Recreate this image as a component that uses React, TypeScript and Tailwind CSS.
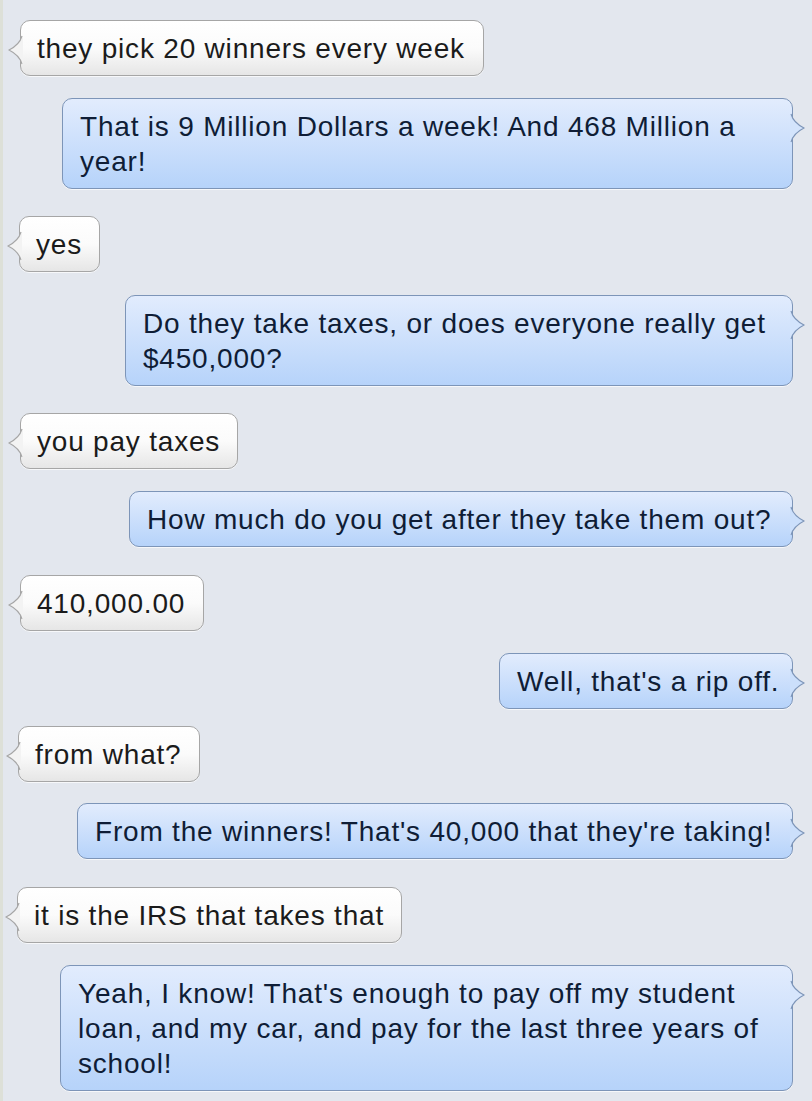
import React from "react";

type Msg = {
  side: "l" | "r";
  lines: string[];
  mt: number;
  off: number;
  w?: number;
};

const msgs: Msg[] = [
  { side: "l", lines: ["they pick 20 winners every week"], mt: 20, off: 20, w: 464 },
  { side: "r", lines: ["That is 9 Million Dollars a week! And 468 Million a", "year!"], mt: 22, off: 19, w: 731 },
  { side: "l", lines: ["yes"], mt: 27, off: 19, w: 81 },
  { side: "r", lines: ["Do they take taxes, or does everyone really get", "$450,000?"], mt: 23, off: 19, w: 668 },
  { side: "l", lines: ["you pay taxes"], mt: 27, off: 20, w: 218 },
  { side: "r", lines: ["How much do you get after they take them out?"], mt: 22, off: 19, w: 664 },
  { side: "l", lines: ["410,000.00"], mt: 28, off: 20, w: 184 },
  { side: "r", lines: ["Well, that's a rip off."], mt: 22, off: 19, w: 294 },
  { side: "l", lines: ["from what?"], mt: 17, off: 18, w: 182 },
  { side: "r", lines: ["From the winners! That's 40,000 that they're taking!"], mt: 21, off: 19, w: 716 },
  { side: "l", lines: ["it is the IRS that takes that"], mt: 28, off: 17, w: 385 },
  { side: "r", lines: ["Yeah, I know! That's enough to pay off my student", "loan, and my car, and pay for the last three years of", "school!"], mt: 22, off: 19, w: 733 },
];

function lerp(a: number[], b: number[], t: number) {
  const c = a.map((v, i) => Math.round(v + (b[i] - v) * t));
  return `rgb(${c[0]},${c[1]},${c[2]})`;
}

function Tail({ side, fill, stroke }: { side: "l" | "r"; fill: string; stroke: string }) {
  const flip = side === "r";
  return (
    <svg
      width="15"
      height="30"
      viewBox="0 0 15 30"
      className={flip ? "absolute top-[14px] right-[-13px] -scale-x-100" : "absolute top-[14px] left-[-13px]"}
    >
      <path d="M14 1 C 12 8, 7 12, 1 15 C 7 18, 12 22, 14 29 L 15 29 L 15 1 Z" fill={fill} />
      <path d="M14 1 C 12 8, 7 12, 1 15 C 7 18, 12 22, 14 29" fill="none" stroke={stroke} strokeWidth="1.1" />
    </svg>
  );
}

function Bubble({ m }: { m: Msg }) {
  const left = m.side === "l";
  const h = m.lines.length * 35 + 21;
  const t = 29 / h;
  const fill = left
    ? lerp([255, 255, 255], [232, 232, 232], t)
    : lerp([225, 236, 253], [182, 211, 250], t);
  return (
    <div
      className={left ? "flex justify-start" : "flex justify-end"}
      style={{ marginTop: m.mt, paddingLeft: left ? m.off : 0, paddingRight: left ? 0 : m.off }}
    >
      <div
        style={{ width: m.w }}
        className={
          left
            ? "relative shrink-0 rounded-[10px] border border-[#a6a6a6] bg-gradient-to-b from-[#ffffff] via-[#fbfbfb] to-[#e6e6e6] pl-[16px] pr-[10px] pt-[10px] pb-[9px] text-[#1b1b1b] shadow-[0_1px_0_rgba(255,255,255,0.7)]"
            : "relative shrink-0 rounded-[10px] border border-[#7d95b8] bg-gradient-to-b from-[#e2ecfd] to-[#b6d3fa] pl-[17px] pr-[10px] pt-[10px] pb-[9px] text-[#0f1d36] shadow-[0_1px_0_rgba(255,255,255,0.7)]"
        }
      >
        <Tail side={m.side} fill={fill} stroke={left ? "#a6a6a6" : "#7d95b8"} />
        <div className="whitespace-nowrap text-[28px] leading-[35px] tracking-[0.8px] font-['Liberation_Sans',Arial,sans-serif]">
          {m.lines.map((l, i) => (
            <div key={i}>{l}</div>
          ))}
        </div>
      </div>
    </div>
  );
}

export default function App() {
  return (
    <div className="relative w-[812px] h-[1101px] overflow-hidden bg-[#e3e7ee]">
      <div className="absolute left-0 top-0 h-full w-[3px] bg-[#dde0d8]" />
      <div className="flex flex-col">
        {msgs.map((m, i) => (
          <Bubble key={i} m={m} />
        ))}
      </div>
    </div>
  );
}
